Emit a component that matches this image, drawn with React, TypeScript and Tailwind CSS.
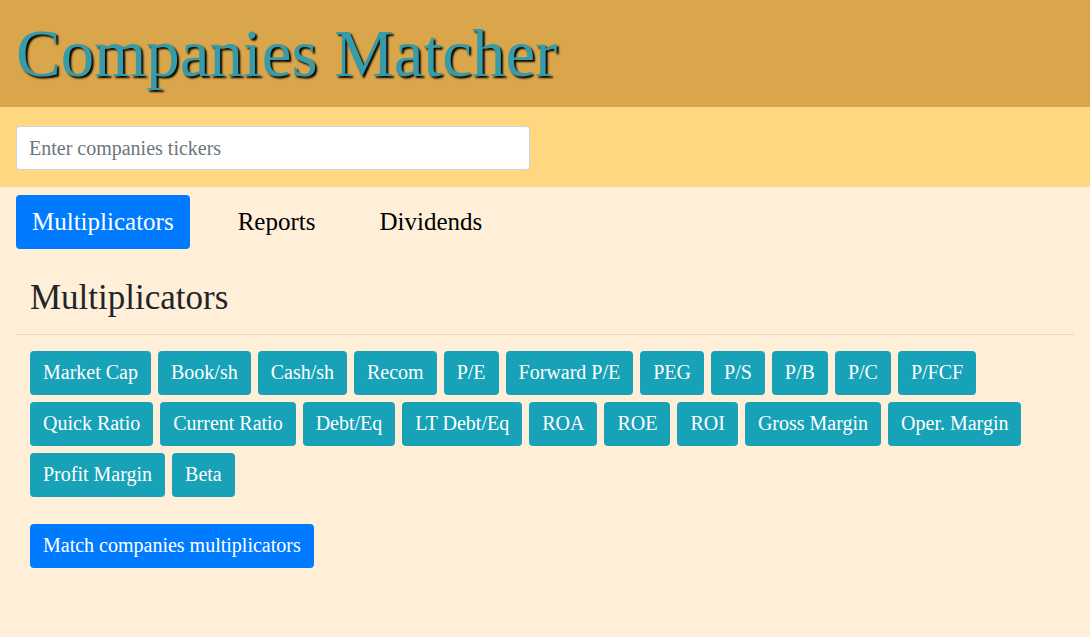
import { useState } from "react";

const multiplicators = [
  "Market Cap",
  "Book/sh",
  "Cash/sh",
  "Recom",
  "P/E",
  "Forward P/E",
  "PEG",
  "P/S",
  "P/B",
  "P/C",
  "P/FCF",
  "Quick Ratio",
  "Current Ratio",
  "Debt/Eq",
  "LT Debt/Eq",
  "ROA",
  "ROE",
  "ROI",
  "Gross Margin",
  "Oper. Margin",
  "Profit Margin",
  "Beta",
];

const tabs = ["Multiplicators", "Reports", "Dividends"];

export default function App() {
  const [tab, setTab] = useState("Multiplicators");
  const [tickers, setTickers] = useState("");

  return (
    <div className="min-h-screen bg-[#ffefd8] font-['Liberation_Serif',serif] text-[#212529]">
      <header className="bg-[#daa64b] px-4 py-[15px]">
        <h1 className="text-[67px] leading-[77px] text-[#379ca9] [text-shadow:2px_2px_2px_#000]">
          Companies Matcher
        </h1>
      </header>

      <div className="bg-[#ffd780] px-4 pt-[19px] pb-[17px]">
        <input
          value={tickers}
          onChange={(e) => setTickers(e.target.value)}
          placeholder="Enter companies tickers"
          className="w-[514px] h-[44px] rounded bg-white border border-[#ced4da] px-3 text-[20px] text-[#495057] placeholder:text-[#6c757d] outline-none"
        />
      </div>

      <nav className="flex gap-8 px-4 pt-2">
        {tabs.map((t) => (
          <button
            key={t}
            onClick={() => setTab(t)}
            className={
              t === tab
                ? "rounded px-4 py-2 text-[25px] leading-[38px] bg-[#007bff] text-white"
                : "rounded px-4 py-2 text-[25px] leading-[38px] text-black"
            }
          >
            {t}
          </button>
        ))}
      </nav>

      <div className="mx-4">
        <h2 className="px-[14px] pt-[28px] pb-[15px] text-[35px] leading-[42px]">Multiplicators</h2>
        <hr className="border-t border-[#e6d8c2]" />

        <div className="px-[14px] pt-4 flex flex-wrap gap-[7px]">
          {multiplicators.map((m) => (
            <button
              key={m}
              className="rounded bg-[#17a2b8] px-[13px] pt-[6px] pb-[8px] text-[20px] leading-[30px] text-white"
            >
              {m}
            </button>
          ))}
        </div>

        <div className="px-[14px] pt-[27px]">
          <button className="rounded bg-[#007bff] px-[13px] pt-[6px] pb-[8px] text-[20px] leading-[30px] text-white">
            Match companies multiplicators
          </button>
        </div>
      </div>
    </div>
  );
}
